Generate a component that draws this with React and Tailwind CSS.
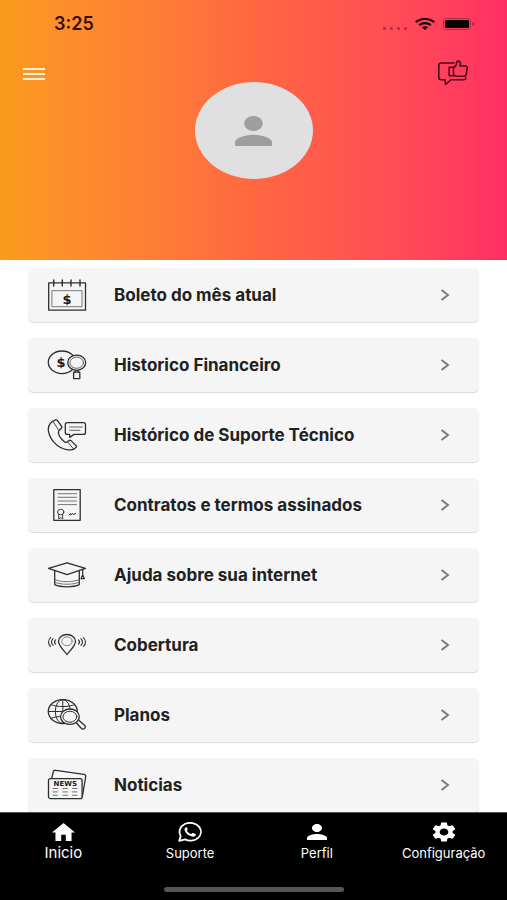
import React from "react";

function Icon({ children }) {
  return (
    <svg
      viewBox="0 0 40 32"
      className="h-8 w-10 shrink-0"
      fill="none"
      stroke="#2e2e2e"
      strokeWidth="1.3"
      strokeLinecap="round"
      strokeLinejoin="round"
      aria-hidden="true"
    >
      {children}
    </svg>
  );
}

const CalendarIcon = () => (
  <Icon>
    <rect x="1.7" y="3.9" width="36.8" height="27.3" />
    <rect x="5.3" y="11.7" width="29.7" height="16" strokeWidth="0.8" stroke="#555" />
    <path d="M6.7 1v6M15.3 1v6M24 1v6M33 1v6" strokeWidth="1.4" />
    <text x="20" y="24.6" textAnchor="middle" fontSize="13" fontWeight="700" fill="#1c1c1c" stroke="none" className="font-['DejaVu_Sans',sans-serif]">$</text>
  </Icon>
);

const CoinSearchIcon = () => (
  <Icon>
    <ellipse cx="15" cy="13.3" rx="13.7" ry="11.3" />
    <text x="14" y="17.8" textAnchor="middle" fontSize="13" fontWeight="700" fill="#1c1c1c" stroke="none" className="font-['DejaVu_Sans',sans-serif]">$</text>
    <ellipse cx="29.7" cy="13.7" rx="9" ry="7.6" fill="#f5f5f5" />
    <ellipse cx="29.7" cy="13.7" rx="6.8" ry="5.6" strokeWidth="0.9" stroke="#555" />
    <path d="M28.2 21.3v2M31.2 21.3v2" />
    <rect x="26.6" y="23.2" width="6.2" height="6.4" />
  </Icon>
);

const PhoneChatIcon = () => (
  <Icon>
    <path d="M8.6 0.9C3.4 3 .6 7.4 1.5 12.4c1.5 8 8.4 16.4 18.3 18.2 3.5.6 6.4.3 7.7-.8l1.9-1.9c.3-.5.1-.9-.4-1.3l-5-5c-.6-.5-1.2-.5-1.9 0l-2 1.5c-1 .6-2 .3-3-.6-2.5-2.2-5-5.5-5.6-8.2-.3-1.3 0-2.3.8-3l2-2c.6-.6.7-1.2.3-1.9L10.5 1.6C10 .9 9.4.6 8.6.9z" />
    <path d="M6.300 2.800l5.200 8.200M20.600 23l6 7" strokeWidth="0.9" />
    <path d="M20.300 3.600h16.200a2 2 0 0 1 2 2v7.800a2 2 0 0 1-2 2H27l-4.200 3-.2-3h-2.300a2 2 0 0 1-2-2V5.600a2 2 0 0 1 2-2z" fill="#f5f5f5" />
    <path d="M22.500 8h12.800M22.500 11.300h10.500" strokeWidth="0.9" stroke="#555" />
  </Icon>
);

const ContractIcon = () => (
  <Icon>
    <rect x="6.8" y="0.7" width="26.4" height="30.6" />
    <path d="M11 4.700h18.500M11 8.300h18.500M11 12h18.500M11 15.600h18.500" strokeWidth="0.9" stroke="#666" />
    <ellipse cx="13.7" cy="23" rx="3.2" ry="2.8" strokeWidth="0.9" />
    <path d="M11.700 25.300v4.600l2-1.300 2 1.300v-4.600" strokeWidth="0.9" />
    <path d="M22 26l1.600-1.600.3 1.500 1.600-1.400.5 1 2.600-.9" strokeWidth="1" />
  </Icon>
);

const GraduationIcon = () => (
  <Icon>
    <path d="M1.500 9.300L20 3.900l18.500 5.400L20 15.600z" />
    <path d="M7.700 11.500v14.100c6 2.900 18.600 2.900 24.600 0V11.500" />
    <path d="M7.700 20.600c6 2.800 18.600 2.800 24.600 0M7.700 23.200c6 2.800 18.600 2.800 24.600 0" strokeWidth="0.8" stroke="#555" />
    <path d="M35.700 10.300v5.400M35.700 15.700l-1.700 4h3.400z" strokeWidth="1.2" />
  </Icon>
);

const CoverageIcon = () => (
  <Icon>
    <path d="M20 25.500c-2-2.800-8.500-8.500-8.500-13.300C11.500 8.400 15.300 5.500 20 5.500s8.500 2.900 8.500 6.700c0 4.800-6.500 10.500-8.500 13.300z" />
    <ellipse cx="20" cy="12.3" rx="5.2" ry="4.4" strokeWidth="0.8" stroke="#666" />
    <path d="M3.600 8.600c-2.800 2.500-2.800 6.300 0 8.800M6.100 9.600c-2.100 2-2.100 4.800 0 6.800M8.500 10.800c-1.200 1.300-1.200 3.100 0 4.400M36.400 8.600c2.800 2.500 2.800 6.300 0 8.800M33.900 9.600c2.100 2 2.100 4.800 0 6.800M31.500 10.800c1.200 1.300 1.200 3.100 0 4.400" strokeWidth="1.1" />
  </Icon>
);

const GlobeSearchIcon = () => (
  <Icon>
    <ellipse cx="15.8" cy="12.5" rx="14.5" ry="12" />
    <ellipse cx="15.8" cy="12.5" rx="7.5" ry="12" strokeWidth="1" />
    <path d="M15.800.5v24M1.300 12.500h29M4 5.700c6.500 2.500 17 2.500 23.600 0M4 19.300c6.500-2.500 17-2.500 23.600 0" strokeWidth="1" />
    <path d="M28.800 23.300l5.700 6.200c1.700 1.500 4.900-.8 3.500-2.700l-6.200-5.600" fill="#f5f5f5" />
    <ellipse cx="22.9" cy="17.7" rx="9.4" ry="7.7" fill="#f5f5f5" />
    <ellipse cx="22.9" cy="17.7" rx="6.9" ry="5.5" strokeWidth="1" />
  </Icon>
);

const NewsIcon = () => (
  <Icon>
    <path d="M4.600 9.500l1.700-6.700c.4-1.200 1.200-1.700 2.500-1.500l28.200 4c1.300.3 1.900 1.100 1.700 2.300l-3.300 19.900" />
    <rect x="1.5" y="9.6" width="33.6" height="20.1" rx="2" fill="#f5f5f5" />
    <text x="18.3" y="16.8" textAnchor="middle" fontSize="7" fontWeight="700" fill="#1c1c1c" stroke="none" className="font-['DejaVu_Sans',sans-serif]">NEWS</text>
    <path d="M6 19.500h4.500M16 19.500h4.500M25.500 19.500H30M6 22.900h4.500M16 22.900h4.500M25.500 22.900H30M6 26.300h4.500M16 26.300h4.500M25.500 26.300H30" strokeWidth="0.9" stroke="#666" />
  </Icon>
);

const PERSON =
  "M12 12c2.210 0 4-1.790 4-4s-1.790-4-4-4-4 1.790-4 4 1.790 4 4 4zm0 2c-2.670 0-8 1.340-8 4v2h16v-2c0-2.660-5.330-4-8-4z";

const items = [
  { label: "Boleto do mês atual", Glyph: CalendarIcon },
  { label: "Historico Financeiro", Glyph: CoinSearchIcon },
  { label: "Histórico de Suporte Técnico", Glyph: PhoneChatIcon },
  { label: "Contratos e termos assinados", Glyph: ContractIcon },
  { label: "Ajuda sobre sua internet", Glyph: GraduationIcon },
  { label: "Cobertura", Glyph: CoverageIcon },
  { label: "Planos", Glyph: GlobeSearchIcon },
  { label: "Noticias", Glyph: NewsIcon },
];

const HomeIcon = () => (
  <svg viewBox="2 3 20 17" preserveAspectRatio="none" className="h-[18px] w-[23px]" fill="#fff" aria-hidden="true">
    <path d="M10 20v-6h4v6h5v-8h3L12 3 2 12h3v8z" />
  </svg>
);

const WhatsappIcon = () => (
  <svg viewBox="0 0 24 20" className="h-5 w-6" fill="none" stroke="#fff" strokeWidth="1.8" strokeLinejoin="round" aria-hidden="true">
    <path d="M1.200 18.800l1.500-4.400C.2 9.700 2 4.200 6.800 2c5-2.300 11.400-1 14.400 2.900 2.600 3.500 2.200 8-1.100 11-3.400 3-8.800 3.700-13 1.500z" />
    <path d="M8.300 5.200c-1.400.4-2 1.500-1.700 2.900.8 3.300 4.400 6.200 8.300 6.600 1.500.1 2.800-.6 3-1.900.1-.4 0-.6-.4-.8l-2.400-1c-.4-.2-.7-.1-.9.2l-.9.9c-2-.6-3.600-1.800-4.500-3.400l.7-.9c.2-.3.2-.5.1-.8l-.8-1.700c-.1-.2-.3-.2-.5-.1z" fill="#fff" stroke="none" />
  </svg>
);

const PersonIcon = () => (
  <svg viewBox="4 4 16 16" preserveAspectRatio="none" className="h-4 w-5" fill="#fff" aria-hidden="true">
    <path d={PERSON} />
  </svg>
);

const GearIcon = () => (
  <svg viewBox="2 2 20 20" preserveAspectRatio="none" className="h-5 w-6" fill="#fff" aria-hidden="true">
    <path d="M19.140 12.940c.04-.3.06-.61.06-.94 0-.32-.02-.64-.07-.94l2.030-1.580c.18-.14.23-.41.12-.61l-1.920-3.320c-.12-.22-.37-.29-.59-.22l-2.390.96c-.5-.38-1.030-.7-1.620-.94l-.36-2.540c-.04-.24-.24-.41-.48-.41h-3.840c-.24 0-.43.17-.47.41l-.36 2.540c-.59.24-1.130.57-1.620.94l-2.390-.96c-.22-.08-.47 0-.59.22L2.740 8.870c-.12.21-.08.47.12.61l2.030 1.580c-.05.3-.09.63-.09.94s.02.64.07.94l-2.030 1.580c-.18.14-.23.41-.12.61l1.920 3.320c.12.22.37.29.59.22l2.390-.96c.5.38 1.030.7 1.620.94l.36 2.540c.05.24.24.41.48.41h3.840c.24 0 .44-.17.47-.41l.36-2.540c.59-.24 1.130-.56 1.620-.94l2.390.96c.22.08.47 0 .59-.22l1.920-3.320c.12-.22.07-.47-.12-.61l-2.010-1.580zM12 15.600c-1.980 0-3.600-1.620-3.600-3.600s1.620-3.600 3.600-3.600 3.600 1.620 3.600 3.600-1.620 3.600-3.600 3.600z" />
  </svg>
);

const tabs = [
  { label: "Inicio", Glyph: HomeIcon, active: true },
  { label: "Suporte", Glyph: WhatsappIcon },
  { label: "Perfil", Glyph: PersonIcon },
  { label: "Configuração", Glyph: GearIcon },
];

function StatusBar() {
  return (
    <div className="flex h-12 items-center justify-between pl-[54px] pr-8">
      <span className="text-lg font-semibold leading-6 text-[#35100a]">3:25</span>
      <div className="flex items-center gap-2">
        <div className="flex gap-1 pt-2">
          <span className="size-[3px] rounded-full bg-[#b32c45]" />
          <span className="size-[3px] rounded-full bg-[#b32c45]" />
          <span className="size-[3px] rounded-full bg-[#b32c45]" />
          <span className="size-[3px] rounded-full bg-[#b32c45]" />
        </div>
        <svg viewBox="0 0 20 12" className="h-3 w-5" fill="none" stroke="#1d0308" strokeWidth="2.2" aria-hidden="true">
          <path d="M.8 4.200C5.800-.2 14.200-.2 19.200 4.200M4.200 7.100c3.200-2.700 8.400-2.700 11.600 0" />
          <path d="M10 12l3.200-2.800c-1.800-1.400-4.600-1.400-6.400 0z" fill="#1d0308" stroke="none" />
        </svg>
        <svg viewBox="0 0 32 12" className="h-3 w-8" aria-hidden="true">
          <rect x="0.5" y="0.5" width="27" height="11" rx="3" fill="none" stroke="#a82a44" />
          <rect x="2" y="2" width="24" height="8" rx="1.5" fill="#050001" />
          <path d="M29.500 4v4c1.200-.3 2-1.100 2-2s-.8-1.700-2-2z" fill="#a82a44" />
        </svg>
      </div>
    </div>
  );
}

export default function App() {
  return (
    <div className="flex min-h-screen flex-col bg-white font-['Inter','Liberation_Sans',sans-serif]">
      <header className="h-[260px] bg-linear-to-r from-[#fb9b1c] via-[#ff6740] to-[#ff2e63]">
        <StatusBar />
        <div className="flex items-start justify-between px-[23px]">
          <button type="button" aria-label="Menu" className="mt-5 flex w-[22px] flex-col gap-[3px]">
            <span className="h-[2px] w-full bg-[#fff0d8]" />
            <span className="h-[2px] w-full bg-[#fff0d8]" />
            <span className="h-[2px] w-full bg-[#fff0d8]" />
          </button>
          <button type="button" aria-label="Avaliação" className="mr-4 mt-3">
            <svg viewBox="0 0 30 26" className="h-[26px] w-[30px]" fill="none" stroke="#4a0a18" strokeWidth="1.6" strokeLinecap="round" strokeLinejoin="round" aria-hidden="true">
              <path d="M16 3H3.500C1.900 3 .8 4 .8 5.500v11.800c0 1.500 1.100 2.500 2.700 2.500H7l.5 4.700 5.300-4.700h12.700c1.300 0 2.200-.5 2.500-1.700" />
              <path d="M11.200 7.300h4.300v8.400h-4.300z" />
              <path d="M15.500 7.800c2.500-1.500 3.200-3.200 3.300-5.600.2-1.500 2.900-1.500 3.500.3.300 1.200.1 2.300-.4 3.500h5.400c1.200 0 2 .7 1.900 1.700l-.9 6.600c-.2 1.200-1 1.900-2.300 1.900h-7.500l-3-.9" />
            </svg>
          </button>
        </div>
        <div className="-mt-1 flex justify-center">
          <div className="flex h-[97px] w-[118px] items-center justify-center rounded-[50%] bg-[#e0e0e0]">
            <svg viewBox="4 4 16 16" preserveAspectRatio="none" className="h-[30px] w-[37px]" fill="#9e9e9e" aria-hidden="true">
              <path d={PERSON} />
            </svg>
          </div>
        </div>
      </header>

      <main className="flex flex-1 flex-col gap-4 px-7 pt-2">
        {items.map(({ label, Glyph }) => (
          <button
            key={label}
            type="button"
            className="flex h-[54px] w-full items-center rounded-[5px] bg-[#f5f5f5] pl-[19px] pr-7 text-left shadow-[0_1px_1px_rgba(0,0,0,0.15)]"
          >
            <Glyph />
            <span className="ml-[27px] flex-1 text-[17px] font-bold leading-6 text-[#212121]">{label}</span>
            <svg viewBox="0 0 12 12" className="h-3 w-3 shrink-0" fill="none" stroke="#7c7c7c" strokeWidth="2" aria-hidden="true">
              <path d="M2.500 1l6.500 5-6.500 5" />
            </svg>
          </button>
        ))}
      </main>

      <nav className="sticky bottom-0 flex h-[88px] flex-col justify-between border-t border-[#555] bg-black pb-2">
        <div className="grid grid-cols-4 pt-2">
          {tabs.map(({ label, Glyph, active }) => (
            <a key={label} href="#" className="flex flex-col items-center text-white">
              <span className="flex h-[22px] items-center">
                <Glyph />
              </span>
              <span className={active ? "text-[15px] leading-5" : "text-[13px] leading-5"}>{label}</span>
            </a>
          ))}
        </div>
        <div className="h-[5px] w-[180px] self-center rounded-full bg-[#565656]" />
      </nav>
    </div>
  );
}
